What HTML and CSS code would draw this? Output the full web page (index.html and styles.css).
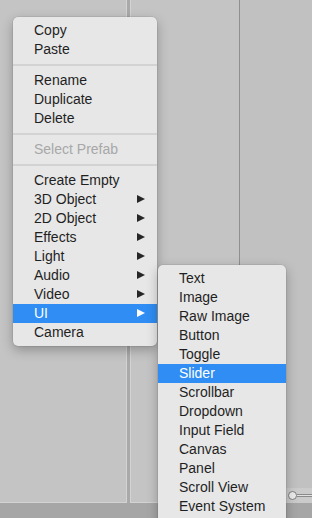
FILE: index.html
```html
<!DOCTYPE html>
<html lang="en">
<head>
  <meta charset="UTF-8">
  <meta name="viewport" content="width=device-width, initial-scale=1.0">
  <title>Hierarchy menu</title>
  <link rel="stylesheet" href="styles.css">
</head>
<body>
  <div class="screen">
    <div class="panes">
      <div class="pane pane-left"></div>
      <div class="divider"></div>
      <div class="pane pane-mid"></div>
      <div class="pane pane-right">
        <div class="toolbar">
          <span class="knob"></span>
          <span class="track"></span>
        </div>
      </div>
    </div>
    <div class="statusbar"></div>

    <!-- context menu -->
    <ul class="menu menu-main">
      <li>Copy</li>
      <li>Paste</li>
      <li class="sep"></li>
      <li>Rename</li>
      <li>Duplicate</li>
      <li>Delete</li>
      <li class="sep"></li>
      <li class="disabled">Select Prefab</li>
      <li class="sep"></li>
      <li>Create Empty</li>
      <li class="sub">3D Object</li>
      <li class="sub">2D Object</li>
      <li class="sub">Effects</li>
      <li class="sub">Light</li>
      <li class="sub">Audio</li>
      <li class="sub">Video</li>
      <li class="sub active">UI</li>
      <li>Camera</li>
    </ul>

    <!-- UI submenu, runs off the bottom of the window -->
    <ul class="menu menu-sub">
      <li>Text</li>
      <li>Image</li>
      <li>Raw Image</li>
      <li>Button</li>
      <li>Toggle</li>
      <li class="active">Slider</li>
      <li>Scrollbar</li>
      <li>Dropdown</li>
      <li>Input Field</li>
      <li>Canvas</li>
      <li>Panel</li>
      <li>Scroll View</li>
      <li>Event System</li>
    </ul>
  </div>
</body>
</html>
```

FILE: styles.css
```css
* {
  margin: 0;
  padding: 0;
  box-sizing: border-box;
}
body {
  font-family: "Liberation Sans", Arial, sans-serif;
  background: #c3c3c3;
}
.screen {
  position: relative;
  width: 312px;
  height: 518px;
  overflow: hidden;
  display: flex;
  flex-direction: column;
}
.panes {
  flex: 1;
  display: flex;
}
.pane {
  background: #c4c4c4;
}
.pane-left {
  width: 127px;
  border-right: 1px solid #d3d3d3;
  border-bottom: 1px solid #d3d3d3;
}
.divider {
  width: 3px;
  background: #a9a9a9;
}
.pane-mid {
  width: 110px;
  border-left: 1px solid #d3d3d3;
  border-right: 1px solid #8f8f8f;
  border-bottom: 1px solid #d3d3d3;
}
.pane-right {
  flex: 1;
  display: flex;
  flex-direction: column;
  justify-content: flex-end;
  background: #c1c1c1;
}
.toolbar {
  height: 15px;
  background: #cbcbcb;
  display: flex;
  align-items: center;
  padding-left: 48px;
}
.knob {
  width: 9px;
  height: 9px;
  border-radius: 50%;
  border: 1px solid #7d7d7d;
  background: #ececec;
}
.track {
  flex: 1;
  height: 3px;
  border-top: 1px solid #8a8a8a;
  border-bottom: 1px solid #8a8a8a;
  background: #e2e2e2;
}
.statusbar {
  height: 15px;
  background: #a6a6a6;
}

.menu {
  position: absolute;
  list-style-type: none;
  background: #e7e7e7;
  border-radius: 5px;
  padding: 4px 0;
  font-size: 14px;
  color: #1f1f1f;
  box-shadow: 0 0 0 0.5px rgba(0, 0, 0, 0.12), 0 4px 12px rgba(0, 0, 0, 0.28);
}
.menu li {
  position: relative;
  height: 19px;
  line-height: 19px;
  padding-left: 21px;
  white-space: nowrap;
}
.menu li.sep {
  height: 12px;
  padding: 5px 0;
}
.menu li.sep::after {
  content: "";
  display: block;
  height: 2px;
  background: #d3d3d3;
}
.menu li.disabled {
  color: #a8a8a8;
}
.menu li.active {
  background: #2f8df3;
  color: #fff;
}
.menu li.sub::after {
  content: "";
  position: absolute;
  right: 12px;
  top: 5px;
  border-left: 8px solid #262626;
  border-top: 4.5px solid transparent;
  border-bottom: 4.5px solid transparent;
}
.menu li.sub.active::after {
  border-left-color: #fff;
}
.menu-main {
  left: 13px;
  top: 17px;
  width: 144px;
}
.menu-sub {
  left: 158px;
  top: 265px;
  width: 128px;
  padding-bottom: 12px;
}
```
